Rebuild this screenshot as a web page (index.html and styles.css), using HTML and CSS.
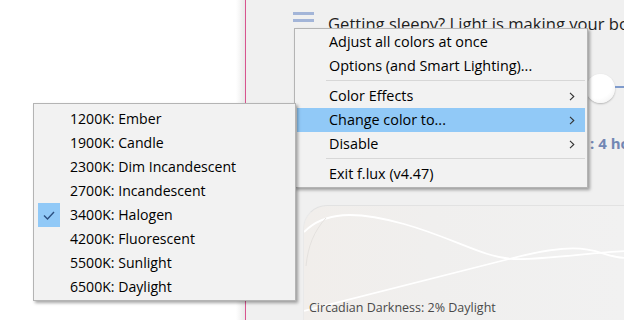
FILE: index.html
```html
<!DOCTYPE html>
<html>
<head>
<meta charset="utf-8">
<link rel="stylesheet" href="styles.css">
</head>
<body>
<div class="desktop">
  <div class="blank"></div>
  <div class="shade"></div>
  <div class="edge"></div>
  <div class="app">
    <div class="header">
      <div class="burger"><span></span><span></span></div>
      <div class="headline">Getting sleepy? Light is making your body think it's daytime.</div>
    </div>
    <div class="slider">
      <div class="knob"></div>
      <div class="track"></div>
    </div>
    <div class="status">: 4 hours</div>
    <div class="panel">
      <svg class="waves" viewBox="0 0 321 115" preserveAspectRatio="none">
        <path d="M0 26 C 20 6, 50 4, 100 18 S 180 52, 210 53 S 290 46, 321 45" fill="none" stroke="#ffffff" stroke-width="1.8"/>
        <path d="M0 105 C 40 95, 120 75, 205 53 S 290 50, 321 52" fill="none" stroke="#ffffff" stroke-width="1.8"/>
        <path d="M2 60 C 4 40, 10 25, 22 12" fill="none" stroke="#e4e1de" stroke-width="1"/>
      </svg>
      <div class="caption">Circadian Darkness: 2% Daylight</div>
    </div>
  </div>
</div>

<div class="menu main-menu">
  <div class="item">Adjust all colors at once</div>
  <div class="item">Options (and Smart Lighting)...</div>
  <div class="sep"></div>
  <div class="item sub">Color Effects<svg class="arrow" viewBox="0 0 6 9" width="6" height="9"><path d="M1 0.8 L4.8 4.5 L1 8.2" fill="none" stroke="#333" stroke-width="1.1"/></svg></div>
  <div class="item sub active">Change color to...<svg class="arrow" viewBox="0 0 6 9" width="6" height="9"><path d="M1 0.8 L4.8 4.5 L1 8.2" fill="none" stroke="#333" stroke-width="1.1"/></svg></div>
  <div class="item sub">Disable<svg class="arrow" viewBox="0 0 6 9" width="6" height="9"><path d="M1 0.8 L4.8 4.5 L1 8.2" fill="none" stroke="#333" stroke-width="1.1"/></svg></div>
  <div class="sep"></div>
  <div class="item">Exit f.lux (v4.47)</div>
</div>

<div class="menu sub-menu">
  <div class="item">1200K: Ember</div>
  <div class="item">1900K: Candle</div>
  <div class="item">2300K: Dim Incandescent</div>
  <div class="item">2700K: Incandescent</div>
  <div class="item checked"><span class="check"><svg viewBox="0 0 22 24" width="22" height="24"><path d="M6 12.5 L9.5 16 L16 9" fill="none" stroke="#2b4f80" stroke-width="1.4"/></svg></span>3400K: Halogen</div>
  <div class="item">4200K: Fluorescent</div>
  <div class="item">5500K: Sunlight</div>
  <div class="item">6500K: Daylight</div>
</div>
</body>
</html>
```

FILE: styles.css
```css
html, body {
  margin: 0;
  padding: 0;
}
body {
  width: 624px;
  height: 320px;
  overflow: hidden;
  position: relative;
  font-family: "Open Sans", "Noto Sans", sans-serif;
  background: #ffffff;
}
.desktop {
  display: flex;
  width: 624px;
  height: 320px;
}
.blank {
  width: 236px;
  background: #ffffff;
}
.shade {
  width: 9px;
  background: linear-gradient(to right, #ffffff, #e9e9e9);
}
.edge {
  width: 1px;
  background: #d8558f;
}
.app {
  flex: 1;
  min-width: 0;
  background: #f0f0f0;
  display: flex;
  flex-direction: column;
  padding-top: 10px;
  overflow: hidden;
}
.header {
  display: flex;
  align-items: flex-start;
  margin-left: 47px;
  gap: 14px;
  height: 20px;
  white-space: nowrap;
}
.burger {
  display: flex;
  flex-direction: column;
  gap: 4px;
  padding-top: 2px;
  flex: none;
}
.burger span {
  display: block;
  width: 21px;
  height: 3px;
  background: #a3b5d8;
}
.headline {
  font-size: 16.6px;
  color: #1e1e1e;
  line-height: 24px;
  margin-top: 2px;
}
.slider {
  display: flex;
  align-items: center;
  margin-top: 43px;
  padding-left: 340px;
  height: 30px;
}
.knob {
  flex: none;
  width: 29px;
  height: 29px;
  border-radius: 50%;
  background: radial-gradient(circle at 40% 35%, #ffffff 55%, #ececec 100%);
  box-shadow: 0 1px 2px rgba(0,0,0,0.25);
}
.track {
  flex: 1;
  height: 2px;
  background: #7f9bcc;
  margin-top: -3px;
}
.status {
  margin-top: 31px;
  padding-left: 344px;
  height: 18px;
  line-height: 18px;
  font-size: 15px;
  font-weight: 700;
  color: #7287b4;
  white-space: nowrap;
}
.panel {
  position: relative;
  margin-top: 53px;
  margin-left: 57px;
  flex: 1;
  border-top-left-radius: 24px;
  border-top: 1px solid #e2e2e2;
  border-left: 1px solid #e9e9e9;
  background: linear-gradient(to right, #f1eeeb, #f0efee 40%, #f1f1f1);
  display: flex;
  flex-direction: column;
  justify-content: flex-end;
  padding: 0 0 4px 5px;
  overflow: hidden;
}
.waves {
  position: absolute;
  left: 0;
  top: 0;
  width: 321px;
  height: 115px;
}
.caption {
  position: relative;
  font-size: 12.5px;
  line-height: 16px;
  color: #4a4a4a;
  white-space: nowrap;
}
.menu {
  position: absolute;
  background: #f2f2f2;
  border: 1px solid #b4b4b4;
  box-shadow: 2px 2px 3px rgba(0,0,0,0.35);
  font-size: 14.4px;
  color: #000;
}
.main-menu {
  left: 294px;
  top: 28px;
  width: 288px;
  padding: 1px 2px;
}
.sub-menu {
  left: 33px;
  top: 103px;
  width: 257px;
  padding: 3px 2px 1px;
  font-size: 14.1px;
}
.item {
  position: relative;
  height: 24px;
  line-height: 24px;
  padding-left: 32px;
  white-space: nowrap;
}
.sub-menu .item {
  padding-left: 34px;
}
.item.active {
  background: #91c9f7;
}
.arrow {
  position: absolute;
  right: 10px;
  top: 8px;
  display: block;
}
.sep {
  height: 1px;
  background: #d7d7d7;
  margin: 2px 0 3px 29px;
}
.check {
  position: absolute;
  left: 2px;
  top: 0;
  width: 22px;
  height: 24px;
  background: #91c9f7;
}
.check svg {
  display: block;
}
```
